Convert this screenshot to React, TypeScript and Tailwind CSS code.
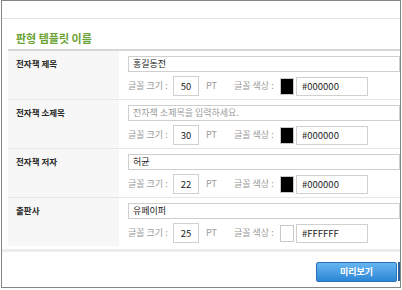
import React from "react";

type Row = {
  label: string;
  value: string;
  placeholder?: string;
  size: string;
  color: string;
  swatch: string;
};

const rows: Row[] = [
  { label: "전자책 제목", value: "홍길동전", size: "50", color: "#000000", swatch: "bg-black" },
  { label: "전자책 소제목", value: "", placeholder: "전자책 소제목을 입력하세요.", size: "30", color: "#000000", swatch: "bg-black" },
  { label: "전자책 저자", value: "허균", size: "22", color: "#000000", swatch: "bg-black" },
  { label: "출판사", value: "유페이퍼", size: "25", color: "#FFFFFF", swatch: "bg-white" }
];

function FieldRow({ row, last }: { row: Row; last: boolean }) {
  return (
    <div className={last ? "flex h-[48px]" : "flex h-[49px] border-b border-[#e6e6e6]"}>
      <div className="w-[111px] shrink-0 whitespace-nowrap bg-[#f7f7f7] pl-2 pt-[6px] text-[8.5px] font-bold leading-[12px] text-[#2a2a2a]">
        {row.label}
      </div>
      <div className="min-w-0 flex-1 whitespace-nowrap pl-[9px] pt-[5px]">
        <div className="flex h-[16px] items-center border border-[#cfcfcf] bg-white pl-[4px] text-[9px] text-[#222]">
          {row.value ? row.value : <span className="text-[#9a9a9a]">{row.placeholder}</span>}
        </div>
        <div className="mt-[4px] flex h-[20px] items-center text-[9px] text-[#9a9a9a]">
          <span className="w-[45px]">글꼴 크기 :</span>
          <span className="flex h-[20px] w-[26px] items-center justify-center border border-[#d0d0d0] text-[9.5px] text-[#222]">
            {row.size}
          </span>
          <span className="ml-[7px] w-[28px]">PT</span>
          <span className="w-[46px]">글꼴 색상 :</span>
          <span className={"h-[17px] w-[14px] border border-[#c8c8c8] " + row.swatch} />
          <span className="ml-[2px] flex h-[19px] w-[72px] items-center border border-[#d0d0d0] pl-[5px] text-[9.5px] text-[#222]">
            {row.color}
          </span>
        </div>
      </div>
    </div>
  );
}

export default function App() {
  return (
    <div
      className="ml-px h-[288px] w-[400px] overflow-hidden border border-[#858585] bg-white"
      style={{ fontFamily: '"Noto Sans CJK KR", "Noto Sans", sans-serif' }}
    >
      <div className="h-[18px] border-b border-[#e2e2e2]" />
      <div className="flex h-[30px] items-end pb-[3px] pl-[14px] text-[11px] font-semibold text-[#6aa334]">
        판형 템플릿 이름
      </div>
      <div className="ml-[6px] border-t-2 border-[#d6d6d6]">
        {rows.map((row, i) => (
          <FieldRow key={row.label} row={row} last={i === rows.length - 1} />
        ))}
      </div>
      <div className="mt-[3px] h-[3px] bg-[#ececec]" />
      <div className="flex justify-end gap-[1px] pt-[10px]">
        <button
          type="button"
          className="h-[20px] w-[81px] rounded-[2px] border border-[#2d71b8] bg-gradient-to-b from-[#66b6f0] to-[#2c86d6] text-[9px] font-bold text-white"
        >
          미리보기
        </button>
        <div className="h-[19px] w-[2px] bg-[#2d5f9a]" />
      </div>
    </div>
  );
}
